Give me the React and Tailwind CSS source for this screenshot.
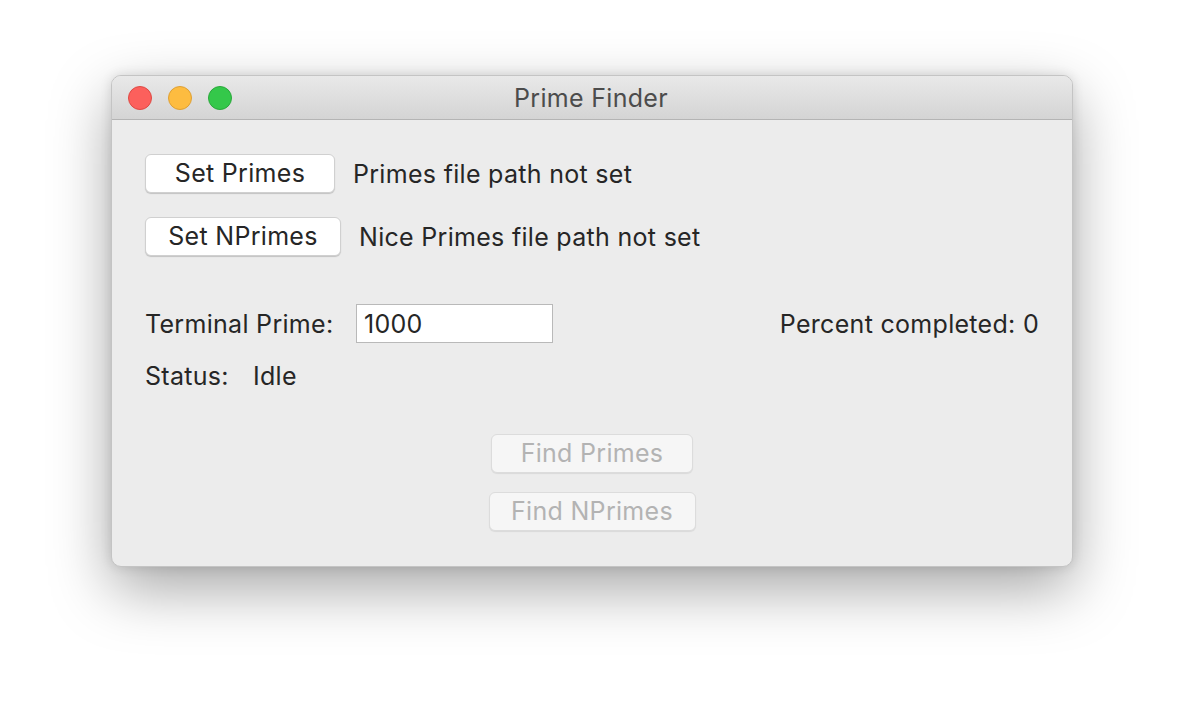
import React from 'react';

const font = { fontFamily: 'Inter, "Noto Sans", "Liberation Sans", sans-serif' };

function MacButton({ children, disabled, className = '' }) {
  return (
    <button
      className={
        'h-[39px] rounded-[6px] border text-[25px] tracking-[0.3px] leading-none flex items-center justify-center ' +
        (disabled
          ? 'bg-[#f6f6f6] border-[#dcdcdc] text-[#b3b3b3] shadow-[0_1px_1px_rgba(0,0,0,0.08)] '
          : 'bg-white border-[#d0d0d0] text-[#262626] shadow-[0_1px_1px_rgba(0,0,0,0.18)] ') +
        className
      }
    >
      {children}
    </button>
  );
}

export default function App() {
  return (
    <div className="min-h-screen bg-white pl-[111px] pt-[75px]" style={font}>
      <div className="w-[962px] h-[492px] rounded-[10px] bg-[#ececec] border border-[#c4c4c4] shadow-[0_22px_60px_rgba(0,0,0,0.35),0_0_12px_rgba(0,0,0,0.12)] overflow-hidden flex flex-col">
        {/* title bar */}
        <div className="relative h-[44px] shrink-0 bg-gradient-to-b from-[#e9e9e9] to-[#d4d4d4] border-b border-[#b4b4b4] flex items-center justify-center">
          <div className="absolute left-[16px] top-[10px] flex gap-[16px]">
            <span className="w-[24px] h-[24px] rounded-full bg-[#fc605c] border border-[#de4a44]" />
            <span className="w-[24px] h-[24px] rounded-full bg-[#fdbc40] border border-[#dea035]" />
            <span className="w-[24px] h-[24px] rounded-full bg-[#34c84a] border border-[#2aa83b]" />
          </div>
          <span className="text-[25px] tracking-[0.3px] text-[#4c4c4c] ml-[-2px] mt-[2px]">Prime Finder</span>
        </div>

        {/* content */}
        <div className="flex-1 flex flex-col pl-[33px] pr-[33px] pt-[34px] text-[25px] tracking-[0.3px] text-[#262626]">
          <div className="flex items-center">
            <MacButton className="w-[190px]">Set Primes</MacButton>
            <span className="ml-[18px] mt-[2px]">Primes file path not set</span>
          </div>
          <div className="flex items-center mt-[23px]">
            <MacButton className="w-[196px]">Set NPrimes</MacButton>
            <span className="ml-[18px] mt-[2px]">Nice Primes file path not set</span>
          </div>

          <div className="flex items-center mt-[48px]">
            <span className="w-[211px] mt-[2px]">Terminal Prime:</span>
            <div className="w-[197px] h-[39px] bg-white border border-[#b9b9b9] flex items-center px-[7px] pt-[2px]">1000</div>
            <span className="ml-auto mt-[2px]">Percent completed: 0</span>
          </div>

          <div className="flex items-center mt-[18px] h-[30px]">
            <span className="w-[108px]">Status:</span>
            <span>Idle</span>
          </div>

          <div className="flex flex-col items-center mt-[42px] gap-[19px]">
            <MacButton disabled className="w-[202px]">Find Primes</MacButton>
            <MacButton disabled className="w-[207px]">Find NPrimes</MacButton>
          </div>
        </div>
      </div>
    </div>
  );
}
